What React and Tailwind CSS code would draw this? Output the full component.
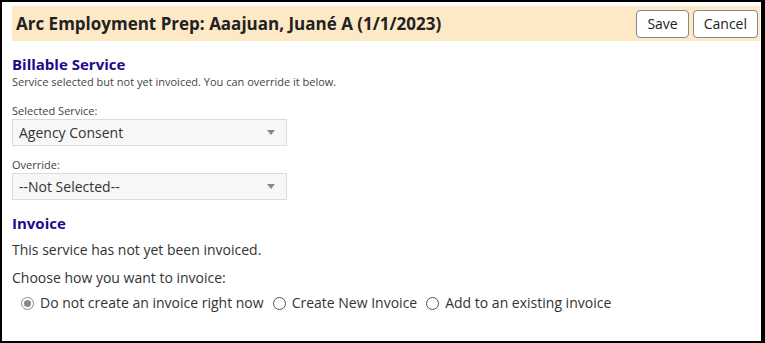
function SelectBox({ value }) {
  return (
    <div className="flex h-[27px] w-[275px] items-center justify-between border border-[#dcdcdc] bg-[#f7f7f7] pl-[6px] pr-[11px] text-[14px] text-[#333]">
      <span>{value}</span>
      <span className="h-0 w-0 border-x-[4px] border-t-[5px] border-x-transparent border-t-[#888]" />
    </div>
  )
}

function Radio({ checked, label }) {
  return (
    <label className="flex items-center gap-[6px]">
      <span className={`flex h-[13px] w-[13px] items-center justify-center rounded-full border ${checked ? 'border-[#8a8a8a]' : 'border-[#555]'}`}>
        {checked && <span className="h-[7px] w-[7px] rounded-full bg-[#8a8a8a]" />}
      </span>
      <span>{label}</span>
    </label>
  )
}

export default function App() {
  return (
    <div className="h-[343px] w-[765px] border-2 border-r-4 border-black bg-white font-['Open_Sans',sans-serif] text-[#333]">
      <div className="ml-[10px] mr-px mt-1 flex h-[35px] items-center justify-between bg-[#fde9c6] pl-[4px] pr-[2px]">
        <h1 className="text-[17px] font-bold text-[#222]">Arc Employment Prep: Aaajuan, Juané A (1/1/2023)</h1>
        <div className="flex gap-[4px]">
          <button className="h-[28px] rounded-[4px] border border-[#888] bg-white px-[10px] text-[14px] text-[#222]">Save</button>
          <button className="h-[28px] rounded-[4px] border border-[#888] bg-white px-[10px] text-[14px] text-[#222]">Cancel</button>
        </div>
      </div>

      <div className="pl-[10px] pt-[13px]">
        <h2 className="text-[15px] font-bold leading-[20px] text-[#1d0a8c]">Billable Service</h2>
        <p className="text-[11px] leading-[16px] text-[#444]">Service selected but not yet invoiced. You can override it below.</p>

        <div className="mt-[13px] text-[11px] leading-[16px] text-[#444]">Selected Service:</div>
        <SelectBox value="Agency Consent" />

        <div className="mt-[11px] text-[11px] leading-[16px] text-[#444]">Override:</div>
        <SelectBox value="--Not Selected--" />

        <h2 className="mt-[13px] text-[15px] font-bold leading-[20px] text-[#1d0a8c]">Invoice</h2>
        <p className="mt-[7px] text-[14px] leading-[20px]">This service has not yet been invoiced.</p>
        <p className="mt-[8px] text-[14px] leading-[20px]">Choose how you want to invoice:</p>
        <div className="mt-[5px] flex gap-[9px] pl-[9px] text-[14px] leading-[20px]">
          <Radio checked label="Do not create an invoice right now" />
          <Radio label="Create New Invoice" />
          <Radio label="Add to an existing invoice" />
        </div>
      </div>
    </div>
  )
}
